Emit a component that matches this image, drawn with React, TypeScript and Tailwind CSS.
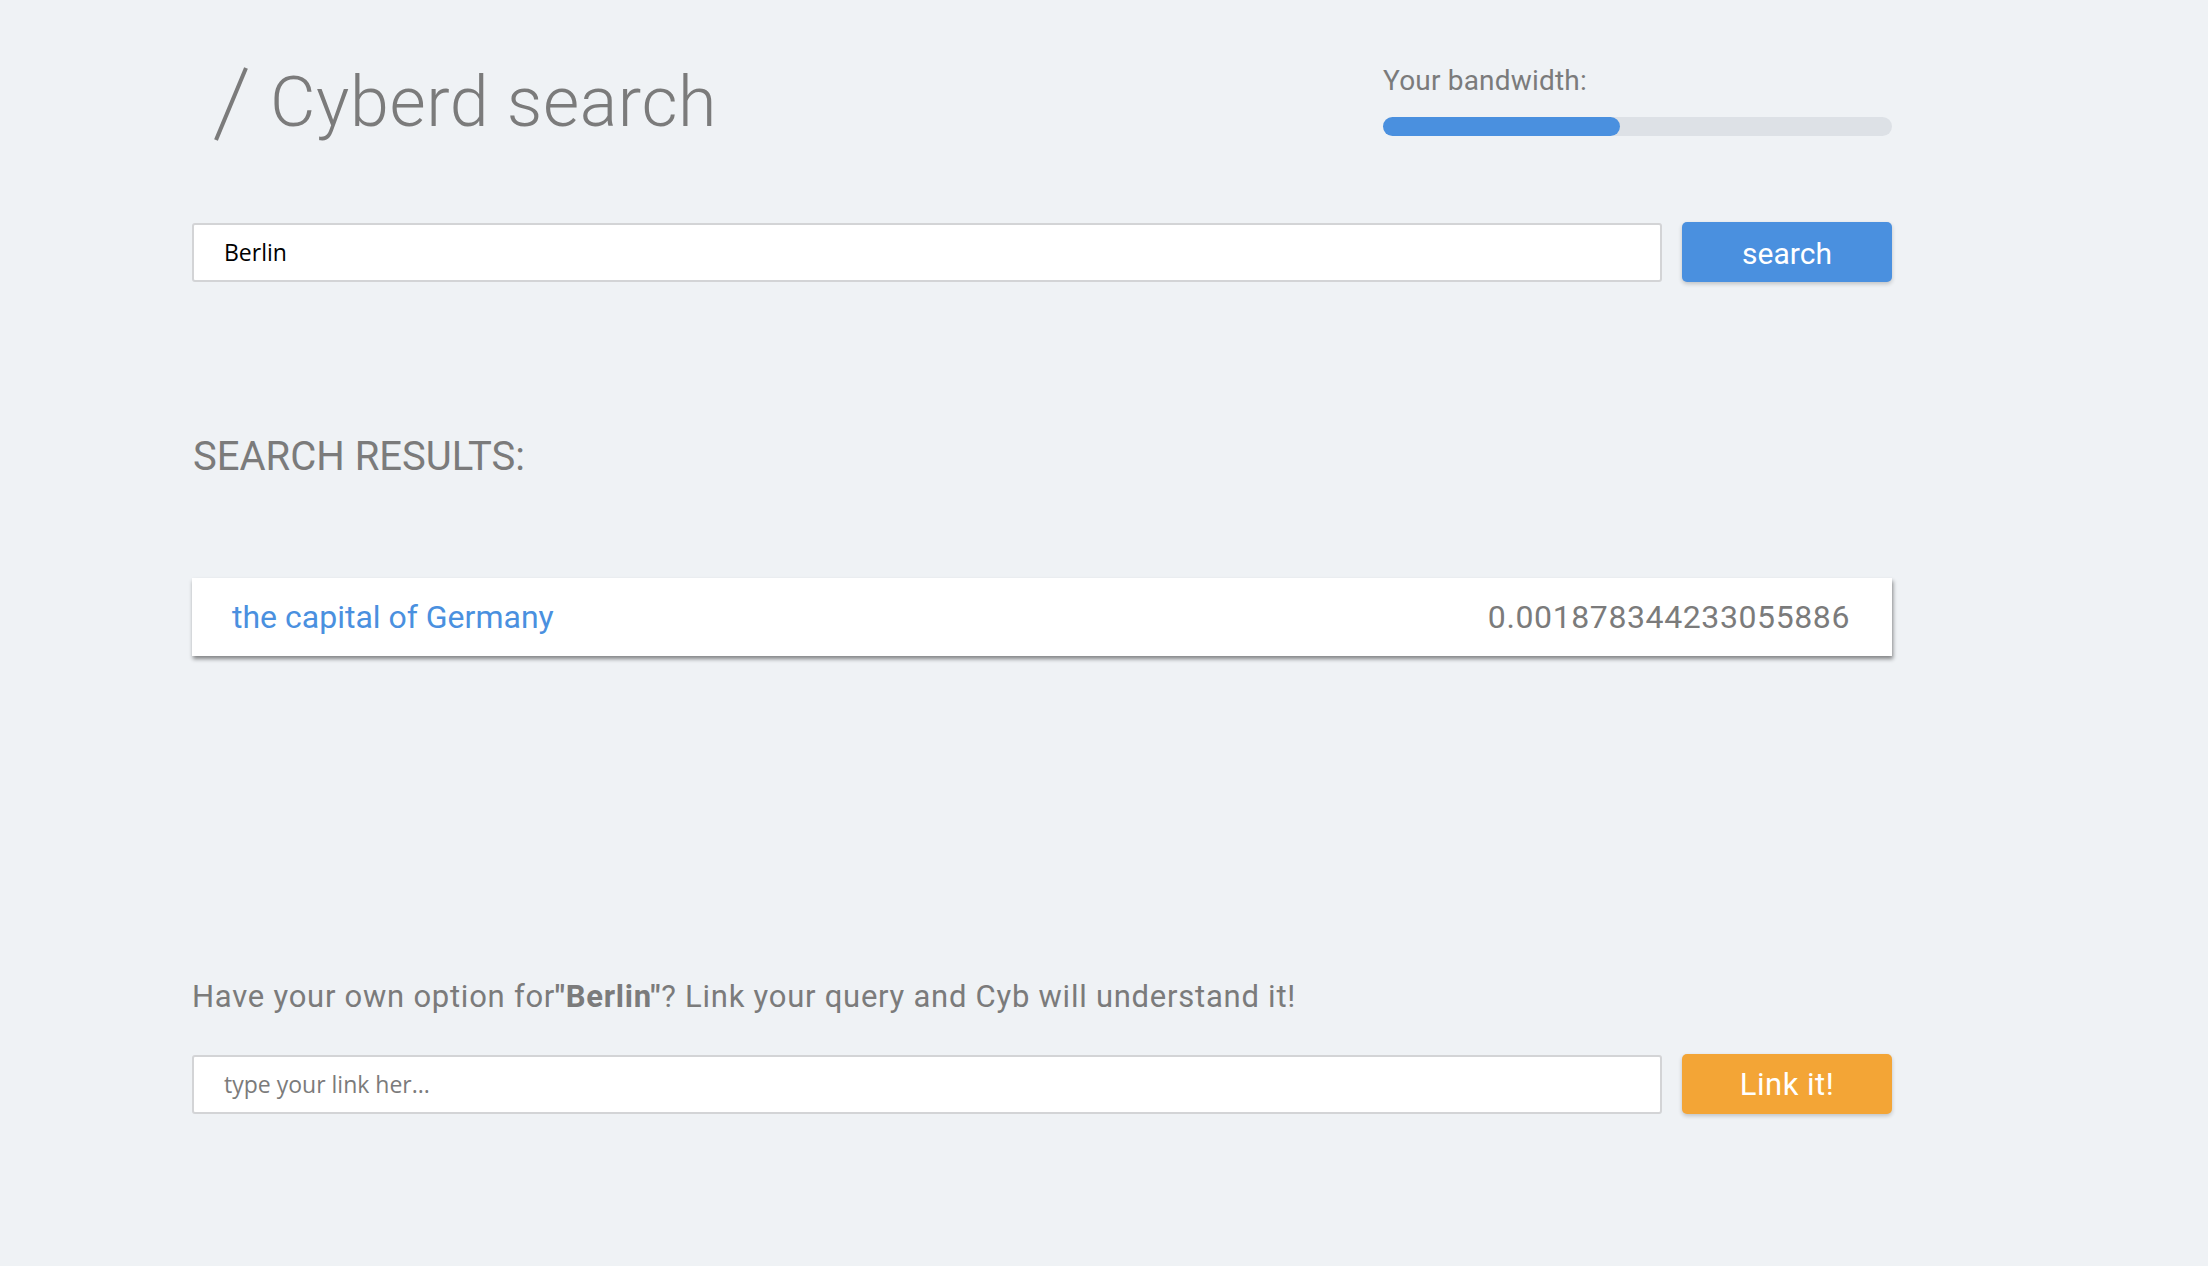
import React from "react";

const play = { fontFamily: "Roboto, 'Noto Sans', sans-serif" };
const open = { fontFamily: "'Open Sans', 'Noto Sans', sans-serif" };

export default function App() {
  return (
    <div className="min-h-[1266px] w-full bg-[#eff2f5]" style={play}>
      <div className="ml-[192px] w-[1700px] pt-[58px]">
        {/* header */}
        <div className="flex items-start justify-between">
          <div className="flex items-center pl-[21px]">
            <svg width="36" height="76" viewBox="0 0 36 76" className="mt-[8px]">
              <line x1="33" y1="2" x2="3" y2="74" stroke="#7b7b7b" strokeWidth="4" />
            </svg>
            <h1 className="ml-[21px] mt-[4px] text-[70px] font-light leading-none tracking-[0.6px] text-[#7b7b7b]">
              Cyberd search
            </h1>
          </div>
          <div className="mt-[9px] w-[509px]">
            <div className="text-[28px] leading-none tracking-[0.2px] text-[#7b7b7b]">Your bandwidth:</div>
            <div className="mt-[22px] h-[19px] w-full rounded-full bg-[#dde1e6]">
              <div className="h-[19px] w-[237px] rounded-full bg-[#4a90df]" />
            </div>
          </div>
        </div>

        {/* search row */}
        <div className="mt-[80px] flex items-center gap-[20px]">
          <div className="flex h-[59px] flex-1 items-center rounded-[3px] border-2 border-[#d3d4d6] bg-white pl-[30px]">
            <span className="text-[23px] text-black" style={open}>
              Berlin
            </span>
          </div>
          <button className="h-[60px] w-[210px] rounded-[5px] bg-[#4a90df] pt-[3px] text-[30px] text-white shadow-[0_2px_4px_rgba(0,0,0,0.2)]">
            search
          </button>
        </div>

        {/* results */}
        <h2 className="mt-[155px] pl-[1px] text-[40px] leading-none text-[#7b7b7b]">SEARCH RESULTS:</h2>

        <div className="mt-[101px] flex h-[78px] items-center justify-between bg-white pl-[40px] pr-[42px] shadow-[1px_3px_4px_rgba(0,0,0,0.45)]">
          <span className="text-[32px] text-[#4a90df]">the capital of Germany</span>
          <span className="text-[32px] tracking-[0.6px] text-[#7b7b7b]">0.001878344233055886</span>
        </div>

        {/* link */}
        <p className="mt-[325px] text-[31px] leading-none tracking-[0.75px] text-[#7b7b7b]">
          Have your own option for<b className="font-bold">"Berlin"</b>? Link your query and Cyb will understand it!
        </p>

        <div className="mt-[42px] flex items-center gap-[20px]">
          <div className="flex h-[59px] flex-1 items-center rounded-[3px] border-2 border-[#d3d4d6] bg-white pl-[30px]">
            <span className="text-[23px] text-[#7b7b7b]" style={open}>
              type your link her...
            </span>
          </div>
          <button className="h-[60px] w-[210px] rounded-[5px] bg-[#f3a536] pt-[3px] text-[31px] tracking-[0.5px] text-white shadow-[0_2px_4px_rgba(0,0,0,0.2)]">
            Link it!
          </button>
        </div>
      </div>
    </div>
  );
}
